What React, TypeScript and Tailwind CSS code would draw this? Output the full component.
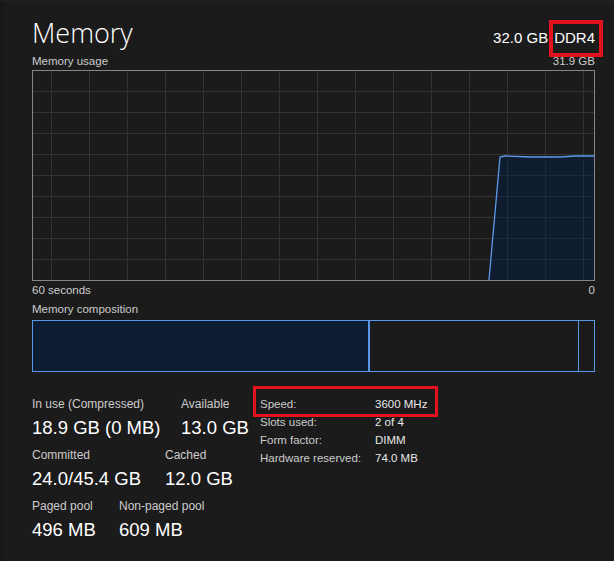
import React from "react";

const GRID_V = Array.from({ length: 15 }, (_, k) => 18 + 38 * k);
const GRID_H = Array.from({ length: 9 }, (_, k) => 20 + 21 * k);

function UsageGraph() {
  const pts = "456,209 467,86 472,85 497,86 527,86 542,85 561,85";
  return (
    <div className="mt-[2px] h-[211px] w-[563px] border border-[#858585]">
      <svg width="561" height="209" viewBox="0 0 561 209" className="block">
        {GRID_V.map((x) => (
          <line key={"v" + x} x1={x + 0.5} y1={0} x2={x + 0.5} y2={209} stroke="#333333" strokeWidth={1} />
        ))}
        {GRID_H.map((y) => (
          <line key={"h" + y} x1={0} y1={y + 0.5} x2={561} y2={y + 0.5} stroke="#333333" strokeWidth={1} />
        ))}
        <polygon points={`${pts} 561,209`} fill="#0f1d33" fillOpacity={0.92} />
        {GRID_V.filter((x) => x > 460).map((x) => (
          <line key={"fv" + x} x1={x + 0.5} y1={90} x2={x + 0.5} y2={209} stroke="#1e2b40" strokeWidth={1} />
        ))}
        {GRID_H.filter((y) => y > 86).map((y) => (
          <line key={"fh" + y} x1={462} y1={y + 0.5} x2={561} y2={y + 0.5} stroke="#1e2b40" strokeWidth={1} />
        ))}
        <polyline points={pts} fill="none" stroke="#5b9bea" strokeWidth={1.3} />
      </svg>
    </div>
  );
}

function Stat({ label, value, w }: { label: string; value: string; w?: string }) {
  return (
    <div className={"flex flex-col " + (w ?? "")}>
      <div className="h-[16px] whitespace-nowrap text-[12px] leading-[16px] text-[#cccccc]">{label}</div>
      <div className="mt-[4px] h-[24px] whitespace-nowrap text-[18.5px] leading-[24px] text-white">{value}</div>
    </div>
  );
}

function InfoRow({ label, value, boxed }: { label: string; value: string; boxed?: boolean }) {
  return (
    <div className="relative flex h-[18px] items-center text-[11.5px] leading-[18px]">
      <span className="w-[115px] text-[#cccccc]">{label}</span>
      <span className="text-[#e8e8e8]">{value}</span>
      {boxed && (
        <span className="pointer-events-none absolute left-[-7px] top-[-9px] h-[31px] w-[185px] border-[3px] border-[#e3121e]" />
      )}
    </div>
  );
}

export default function App() {
  return (
    <div className="h-[561px] w-[614px] overflow-hidden border-l-[4px] border-t-[3px] border-l-[#171717] border-t-[#202020] bg-[#1b1b1b] pl-[28px] pt-[16px] font-['Segoe_UI','Liberation_Sans',sans-serif] text-white">
      <div className="flex w-[563px] flex-col">
        {/* Header */}
        <div className="flex h-[28px] items-baseline justify-between">
          <div className="font-['Open_Sans',sans-serif] text-[27px] font-light leading-[28px] text-white">Memory</div>
          <div className="flex items-baseline text-[15px] leading-[28px] text-white">
            <span>32.0 GB</span>
            <span className="relative ml-[6px]">
              DDR4
              <span className="pointer-events-none absolute bottom-[-5px] left-[-5px] right-[-8px] top-[-4px] border-[4px] border-[#e3121e]" />
            </span>
          </div>
        </div>

        {/* Memory usage label row */}
        <div className="mt-[7px] flex h-[14px] items-center justify-between text-[11.5px] leading-[14px] text-[#cccccc]">
          <span>Memory usage</span>
          <span>31.9 GB</span>
        </div>

        <UsageGraph />

        <div className="mt-[2px] flex h-[14px] items-center justify-between text-[11.5px] leading-[14px] text-[#cccccc]">
          <span>60 seconds</span>
          <span>0</span>
        </div>

        <div className="mt-[5px] h-[14px] text-[11.5px] leading-[14px] text-[#cccccc]">Memory composition</div>

        {/* Composition bar */}
        <div className="mt-[4px] flex h-[52px] w-[563px] border border-[#5a97e6]">
          <div className="w-[335px] bg-[#0f1d33]" />
          <div className="w-[2px] bg-[#5a97e6]" />
          <div className="w-[208px]" />
          <div className="w-[1px] bg-[#5a97e6]" />
          <div className="flex-1" />
        </div>

        {/* Stats */}
        <div className="mt-[24px] flex">
          <div className="flex w-[228px] flex-col gap-[7px]">
            <div className="flex">
              <Stat label="In use (Compressed)" value="18.9 GB (0 MB)" w="w-[149px]" />
              <Stat label="Available" value="13.0 GB" />
            </div>
            <div className="flex">
              <Stat label="Committed" value="24.0/45.4 GB" w="w-[133px]" />
              <Stat label="Cached" value="12.0 GB" />
            </div>
            <div className="flex">
              <Stat label="Paged pool" value="496 MB" w="w-[87px]" />
              <Stat label="Non-paged pool" value="609 MB" />
            </div>
          </div>
          <div className="mt-[-1px] flex flex-col">
            <InfoRow label="Speed:" value="3600 MHz" boxed />
            <InfoRow label="Slots used:" value="2 of 4" />
            <InfoRow label="Form factor:" value="DIMM" />
            <InfoRow label="Hardware reserved:" value="74.0 MB" />
          </div>
        </div>
      </div>
    </div>
  );
}
